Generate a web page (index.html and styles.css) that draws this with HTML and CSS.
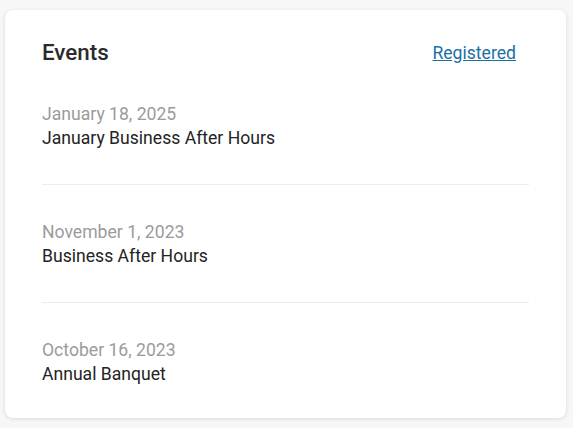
FILE: index.html
```html
<!DOCTYPE html>
<html>
<head>
<meta charset="utf-8">
<link rel="stylesheet" href="styles.css">
</head>
<body>
<div class="card">
  <div class="card-header">
    <h2 class="title">Events</h2>
    <a class="link" href="#">Registered</a>
  </div>
  <ul class="events">
    <li class="event">
      <div class="date">January 18, 2025</div>
      <div class="name">January Business After Hours</div>
    </li>
    <li class="event">
      <div class="date">November 1, 2023</div>
      <div class="name">Business After Hours</div>
    </li>
    <li class="event">
      <div class="date">October 16, 2023</div>
      <div class="name">Annual Banquet</div>
    </li>
  </ul>
</div>
</body>
</html>
```
FILE: styles.css
```css
html, body {
  margin: 0;
  padding: 0;
  background: #f7f7f7;
  font-family: Roboto, "Liberation Sans", sans-serif;
}
body {
  padding: 10px 7px 11px 5px;
}
.card {
  background: #fff;
  border-radius: 8px;
  box-shadow: 0 1px 4px rgba(0,0,0,0.12);
  padding: 28px 37px 32px 37px;
}
.card-header {
  display: flex;
  justify-content: space-between;
  align-items: center;
  padding-right: 13px;
}
.title {
  margin: 0;
  font-size: 22.4px;
  font-weight: 500;
  color: #2b2b2b;
  line-height: 29px;
}
.link {
  color: #1c6fa3;
  font-size: 17.6px;
  text-decoration: underline;
}
.events {
  list-style: none;
  margin: 35px 0 0 0;
  padding: 0;
}
.event {
  padding: 0 0 34px 0;
  border-bottom: 1px solid #ececec;
  margin-bottom: 35px;
}
.event:last-child {
  border-bottom: none;
  margin-bottom: 0;
  padding-bottom: 0;
}
.date {
  color: #9b9b9b;
  font-size: 17.6px;
  line-height: 24px;
}
.name {
  color: #232323;
  font-size: 17.6px;
  line-height: 24px;
}
```
